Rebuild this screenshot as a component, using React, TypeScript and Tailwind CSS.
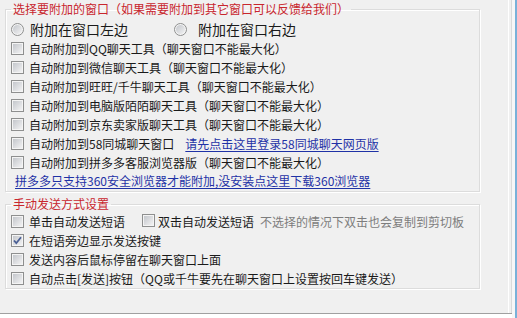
import type { ReactNode } from "react";

const FONT = { fontFamily: '"Noto Sans CJK SC", "Noto Sans", sans-serif' };

// Windows 7 style checkbox
function CheckBox({ checked = false }: { checked?: boolean }) {
    return (
        <span className="relative inline-block w-[13px] h-[13px] shrink-0 border border-[#8e8f8f] bg-[#f4f4f4]">
            <span className="absolute left-[1px] top-[1px] w-[9px] h-[9px] bg-gradient-to-br from-[#c4c7cc] to-[#f2f2f3]" />
            {checked && (
                <svg className="absolute -left-[1px] -top-[1px]" width="13" height="13" viewBox="0 0 13 13">
                    <path d="M3 6.5 L5.3 9.2 L10 3.2" fill="none" stroke="#4a5f95" strokeWidth="1.8" />
                </svg>
            )}
        </span>
    );
}

function Radio() {
    return (
        <span className="relative inline-block w-[13px] h-[13px] shrink-0 rounded-full border border-[#8e8f8f] bg-[#f4f4f4]">
            <span className="absolute left-[1px] top-[1px] w-[9px] h-[9px] rounded-full bg-gradient-to-br from-[#c4c7cc] to-[#f2f2f3]" />
        </span>
    );
}

function CheckRow({ children, checked }: { children: ReactNode; checked?: boolean }) {
    return (
        <div className="flex items-center h-[19px] text-[12px] leading-[19px] whitespace-nowrap">
            <CheckBox checked={checked} />
            <span className="ml-[5px]">{children}</span>
        </div>
    );
}

function Group({ title, children, className }: { title: string; children: ReactNode; className?: string }) {
    return (
        <fieldset
            className={`w-[475px] ml-[5px] pl-[5px] border border-[#dcdcdc] shadow-[inset_1px_1px_0_#ffffff,1px_1px_0_#ffffff] ${className ?? ""}`}
        >
            <legend className="px-[2px] text-[12px] leading-[16px] text-[#c8262e]">{title}</legend>
            {children}
        </fieldset>
    );
}

export default function App() {
    return (
        <div className="w-[517px] h-[318px] flex bg-white overflow-hidden text-[#1a1a1a]" style={FONT}>
            <div className="w-[512px] flex flex-col">
                <div className="h-[313px] flex bg-[#f0f0f0] border-r border-[#dadada]">
                    <div className="w-[508px] flex flex-col">
                        <Group title="选择要附加的窗口（如果需要附加到其它窗口可以反馈给我们）" className="mt-[1px] pb-[1px]">
                            <div className="flex items-center h-[20px] mt-[2px] text-[14px] leading-[20px]">
                                <div className="flex items-center w-[163px]">
                                    <Radio />
                                    <span className="ml-[6px]">附加在窗口左边</span>
                                </div>
                                <div className="flex items-center">
                                    <Radio />
                                    <span className="ml-[11px]">附加在窗口右边</span>
                                </div>
                            </div>
                            <CheckRow>自动附加到QQ聊天工具（聊天窗口不能最大化）</CheckRow>
                            <CheckRow>自动附加到微信聊天工具（聊天窗口不能最大化）</CheckRow>
                            <CheckRow>自动附加到旺旺/千牛聊天工具（聊天窗口不能最大化）</CheckRow>
                            <CheckRow>自动附加到电脑版陌陌聊天工具（聊天窗口不能最大化）</CheckRow>
                            <CheckRow>自动附加到京东卖家版聊天工具（聊天窗口不能最大化）</CheckRow>
                            <CheckRow>
                                自动附加到58同城聊天窗口
                                <span className="ml-[11px] text-[#1f32a6] underline underline-offset-2">
                                    请先点击这里登录58同城聊天网页版
                                </span>
                            </CheckRow>
                            <CheckRow>自动附加到拼多多客服浏览器版（聊天窗口不能最大化）</CheckRow>
                            <div className="h-[18px] ml-[4px] text-[12px] leading-[18px] text-[#1f32a6] underline underline-offset-2 whitespace-nowrap">
                                拼多多只支持360安全浏览器才能附加,没安装点这里下载360浏览器
                            </div>
                        </Group>
                        <Group title="手动发送方式设置" className="mt-[4px]">
                            <div className="flex items-center h-[19px] text-[12px] leading-[19px] whitespace-nowrap">
                                <CheckBox />
                                <span className="ml-[5px]">单击自动发送短语</span>
                                <span className="ml-[17px]">
                                    <CheckBox />
                                </span>
                                <span className="ml-[3px]">双击自动发送短语</span>
                                <span className="ml-[6px] text-[#7d7d7d]">不选择的情况下双击也会复制到剪切板</span>
                            </div>
                            <CheckRow checked>在短语旁边显示发送按键</CheckRow>
                            <CheckRow>发送内容后鼠标停留在聊天窗口上面</CheckRow>
                            <CheckRow>自动点击[发送]按钮（QQ或千牛要先在聊天窗口上设置按回车键发送）</CheckRow>
                        </Group>
                    </div>
                    <div className="w-[1px] bg-white" />
                </div>
                <div className="h-[1px] bg-[#a0a0a0]" />
            </div>
            <div className="w-[3px] bg-[#f7f7f7]" />
            <div className="w-[2px] bg-[#79b1d9]" />
        </div>
    );
}
